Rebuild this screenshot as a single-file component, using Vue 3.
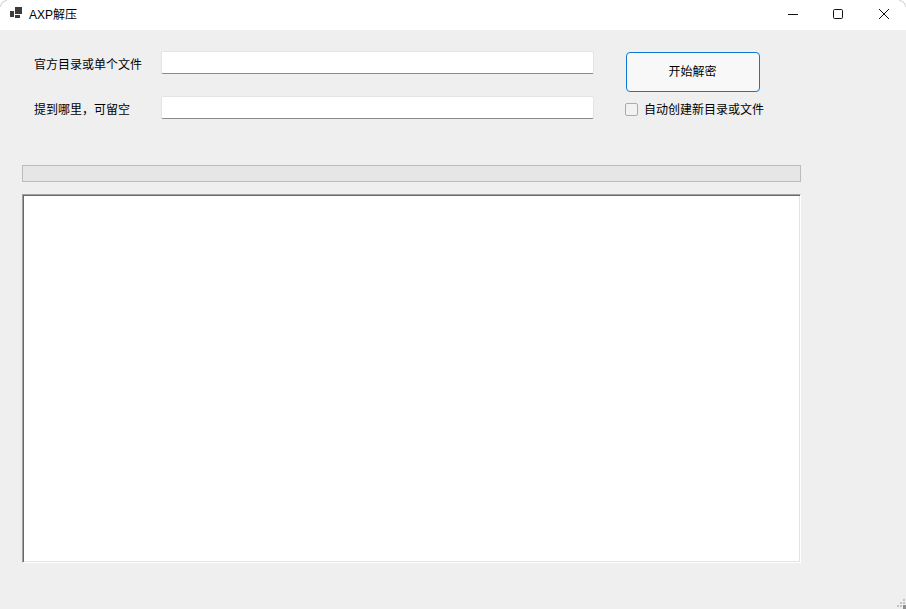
<script setup>
</script>

<template>
  <div class="window">
    <header class="titlebar">
      <div class="brand">
        <svg class="logo" width="13" height="12" viewBox="0 0 13 12">
          <rect x="0" y="4" width="4" height="6" fill="#3c3c3c" />
          <rect x="5" y="0" width="7" height="7" fill="#3c3c3c" />
          <rect x="5" y="8" width="5" height="3" fill="#3c3c3c" />
        </svg>
        <span class="title">AXP解压</span>
      </div>
      <div class="controls">
        <svg width="46" height="30" viewBox="0 0 46 30"><path d="M20 14.5h10" stroke="#111" fill="none" /></svg>
        <svg width="46" height="30" viewBox="0 0 46 30"><rect x="19.5" y="9.5" width="9" height="9" rx="1.2" stroke="#111" fill="none" /></svg>
        <svg width="46" height="30" viewBox="0 0 46 30"><path d="M19 9l10 10M29 9L19 19" stroke="#111" fill="none" /></svg>
      </div>
    </header>
    <main class="content">
      <section class="form">
        <div class="fields">
          <label class="row"><span class="label">官方目录或单个文件</span><input class="input" /></label>
          <label class="row"><span class="label">提到哪里，可留空</span><input class="input" /></label>
        </div>
        <div class="actions">
          <button class="start"><span>开始解密</span></button>
          <label class="check"><span class="box"></span><span class="check-text">自动创建新目录或文件</span></label>
        </div>
      </section>
      <div class="progress"></div>
      <div class="log"></div>
    </main>
    <span class="corner corner-left"></span>
    <span class="corner corner-right"></span>
    <svg class="grip" width="10" height="10" viewBox="0 0 10 10">
      <g fill="#c4c4c4">
        <rect x="7" y="0" width="2" height="2" />
        <rect x="4" y="3" width="2" height="2" />
        <rect x="7" y="3" width="2" height="2" />
        <rect x="1" y="6" width="2" height="2" />
        <rect x="4" y="6" width="2" height="2" />
      </g>
      <rect x="7" y="6" width="3" height="4" fill="#8f8f8f" />
    </svg>
  </div>
</template>

<style>
html, body { margin: 0; background: #efefef; }
</style>

<style scoped>
.window {
  position: relative;
  width: 906px;
  height: 609px;
  overflow: hidden;
  background: #efefef;
  font: 12px "Liberation Sans", "Noto Sans CJK SC", sans-serif;
  color: #000;
}
.titlebar {
  height: 30px;
  background: #fff;
  display: flex;
  justify-content: space-between;
  align-items: center;
}
.brand { display: flex; align-items: center; padding-left: 10px; gap: 6px; }
.logo { display: block; margin-top: -4px; }
.title { margin-top: -3px; }
.controls { display: flex; }
.controls svg { display: block; }
.corner {
  position: absolute;
  top: 0;
  width: 7px;
  height: 7px;
  box-sizing: border-box;
  border-top: 1px solid #d4d4d4;
}
.corner-left { left: 0; border-left: 1px solid #d4d4d4; border-top-left-radius: 7px; }
.corner-right { right: 0; border-right: 1px solid #d4d4d4; border-top-right-radius: 7px; }
.content { padding: 22px 105px 0 22px; }
.form { display: flex; height: 113px; }
.fields { display: flex; flex-direction: column; gap: 23px; padding-left: 12px; }
.row { display: flex; align-items: center; height: 22px; }
.label { width: 127px; }
.input {
  width: 433px;
  height: 23px;
  margin-top: -1px;
  box-sizing: border-box;
  padding: 0;
  background: #fff;
  border: 1px solid #e4e4e4;
  border-bottom: 1px solid #8a8a8a;
  border-radius: 2px;
  outline: none;
}
.actions { display: flex; flex-direction: column; margin-left: 31px; }
.start {
  width: 134px;
  height: 40px;
  margin-left: 1px;
  background: #f8f8f8;
  border: 1px solid #0f78d4;
  border-radius: 4px;
  font: inherit;
  color: #000;
  padding: 0 1px 3px 0;
}
.check { display: flex; align-items: center; gap: 6px; margin-top: 11px; height: 13px; }
.check-text { margin-top: -2px; }
.box {
  width: 13px;
  height: 13px;
  box-sizing: border-box;
  background: #f2f2f2;
  border: 1px solid #ababab;
  border-radius: 2px;
}
.progress {
  height: 17px;
  box-sizing: border-box;
  background: #e6e6e6;
  border: 1px solid #bcbcbc;
}
.log {
  height: 369px;
  margin-top: 12px;
  box-sizing: border-box;
  background: #fff;
  border-style: solid;
  border-width: 1px;
  border-color: #a0a0a0 #fff #fff #a0a0a0;
  box-shadow: inset 1px 1px 0 #696969, inset -1px -1px 0 #e3e3e3;
}
.grip { position: absolute; right: 0; bottom: 0; }
</style>
